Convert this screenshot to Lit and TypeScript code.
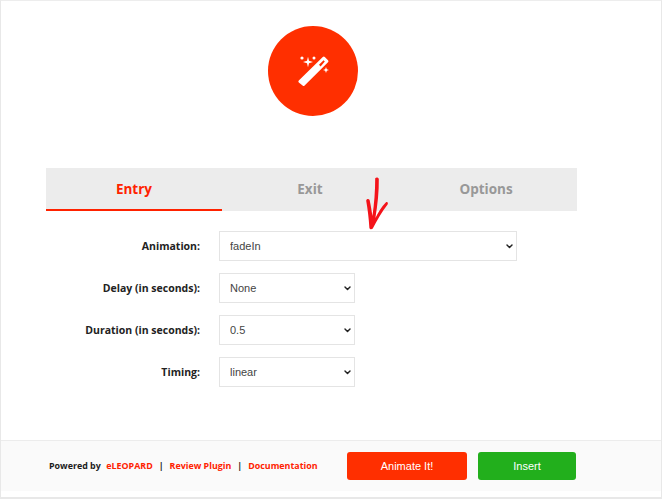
import { LitElement, html, css } from "lit";
import { customElement } from "lit/decorators.js";

const chevron = html`<svg class="chev" width="7" height="5" viewBox="0 0 8 6" fill="none" stroke="#222" stroke-width="1.7" stroke-linecap="round" stroke-linejoin="round"><path d="M1 1.2 L4 4.2 L7 1.2"/></svg>`;

@customElement("app-root")
export class AppRoot extends LitElement {
  static styles = css`
    :host { display: block; width: 662px; height: 499px; background: #fff; position: relative; overflow: hidden; font-family: "Open Sans", sans-serif; }
    .frame { box-sizing: border-box; width: 662px; height: 499px; border: 1px solid #e8e8e8; border-width: 1px 1px 2px 1px; border-top-color: #ededed; display: flex; flex-direction: column; }
    .hero { display: flex; justify-content: center; padding: 25px 36px 0 0; height: 167px; box-sizing: border-box; flex: none; }
    .circle { width: 90px; height: 90px; border-radius: 50%; background: #ff2f00; display: flex; align-items: center; justify-content: center; }
    .tabs { margin-left: 45px; width: 531px; height: 43px; background: #ececec; display: flex; flex: none; }
    .tab { width: 176px; box-sizing: border-box; height: 43px; text-align: center; font-size: 13.5px; font-weight: 700; line-height: 42px; color: #989898; }
    .tab.active { color: #ff2200; border-bottom: 2px solid #ff2200; }
    .form { padding-top: 20px; flex: 1; display: flex; flex-direction: column; gap: 12px; }
    .row { display: flex; align-items: center; height: 30px; }
    label { width: 199px; text-align: right; font-size: 10.5px; font-weight: 700; color: #222; margin-right: 19px; flex: none; }
    .sel { position: relative; display: flex; width: 136px; height: 30px; }
    .sel.wide { width: 298px; }
    .chev { position: absolute; right: 4px; top: 13px; pointer-events: none; }
    select { appearance: none; -webkit-appearance: none; box-sizing: border-box; height: 30px; width: 100%; border: 1px solid #e4e4e4; border-radius: 0; background: #fff; font-family: "Liberation Sans", sans-serif; font-size: 11px; color: #444; padding: 0 10px; margin: 0; outline: none; }
    footer { height: 57px; box-sizing: border-box; border-top: 1px solid #ececec; display: flex; align-items: flex-start; background: linear-gradient(#fafafa 50px, #fff 50px); flex: none; }
    .credits { width: 346px; flex: none; box-sizing: border-box; padding: 18px 0 0 48px; font-size: 8.9px; font-weight: 700; color: #1c1c1c; line-height: 14px; display: flex; white-space: nowrap; }
    .credits a { color: #ff2200; text-decoration: none; }
    .credits .by { margin-right: 5.5px; }
    .credits .sep { margin: 0 6px; }
    button { box-sizing: border-box; height: 28px; margin-top: 11px; border: none; border-radius: 3px; color: #fff; font-family: "Liberation Sans", sans-serif; font-size: 11px; padding: 0; }
    .animate { width: 120px; background: #ff2f00; margin-right: 11px; }
    .insert { width: 98px; background: #22af1c; }
    .arrow { position: absolute; left: 362px; top: 174px; pointer-events: none; }
  `;

  render() {
    return html`
      <div class="frame">
        <div class="hero">
          <div class="circle">
            <svg width="90" height="90" viewBox="0 0 90 90" fill="#fff">
              <path fill-rule="evenodd" d="M30.8 54.6 L54.8 31 Q55.8 30 56.8 31 L60 34.2 Q61 35.2 60 36.2 L36.6 59.6 Q35.6 60.6 34.6 59.6 L30.8 56.6 Q29.8 55.6 30.8 54.6 Z M51 38.8 L52.6 40.4 L56.8 35.4 L55.6 34.2 Z"/>
              <path d="M40 30.8 L41 34.8 L45 36 L41 37.2 L40 41.2 L39 37.2 L35 36 L39 34.8 Z"/>
              <circle cx="34" cy="32" r="1.6"/>
              <circle cx="46" cy="32" r="1.5"/>
              <path d="M58 41 L58.8 43.2 L61 44 L58.8 44.8 L58 47 L57.2 44.8 L55 44 L57.2 43.2 Z"/>
            </svg>
          </div>
        </div>
        <div class="tabs">
          <div class="tab active">Entry</div>
          <div class="tab">Exit</div>
          <div class="tab">Options</div>
        </div>
        <div class="form">
          <div class="row"><label>Animation:</label><div class="sel wide"><select><option>fadeIn</option></select>${chevron}</div></div>
          <div class="row"><label>Delay (in seconds):</label><div class="sel"><select><option>None</option></select>${chevron}</div></div>
          <div class="row"><label>Duration (in seconds):</label><div class="sel"><select><option>0.5</option></select>${chevron}</div></div>
          <div class="row"><label>Timing:</label><div class="sel"><select><option>linear</option></select>${chevron}</div></div>
        </div>
        <footer>
          <div class="credits"><span class="by">Powered by</span><a>eLEOPARD</a><span class="sep">|</span><a>Review Plugin</a><span class="sep">|</span><a>Documentation</a></div>
          <button class="animate">Animate It!</button>
          <button class="insert">Insert</button>
        </footer>
      </div>
      <svg class="arrow" width="30" height="58" viewBox="0 0 30 58" fill="#f4131a">
        <path d="M13.2 4.2 C14.4 3 16.4 3.4 16.8 5 C17 17 15.6 31 13.4 44 C16 38.5 19.6 32.6 24 28.2 C25.6 27.6 26.4 29 25.6 30.4 C20.6 37 15 46 10.8 54.6 C9.6 55.8 7.8 55.4 7.4 54 C6.8 44 5.6 35 4.2 26.8 C4.2 24.8 6.8 24.4 7.6 26 C8.8 31.6 9.6 36.6 10.4 42 C12.2 30 13.2 17 13.2 4.2 Z"/>
      </svg>
    `;
  }
}
